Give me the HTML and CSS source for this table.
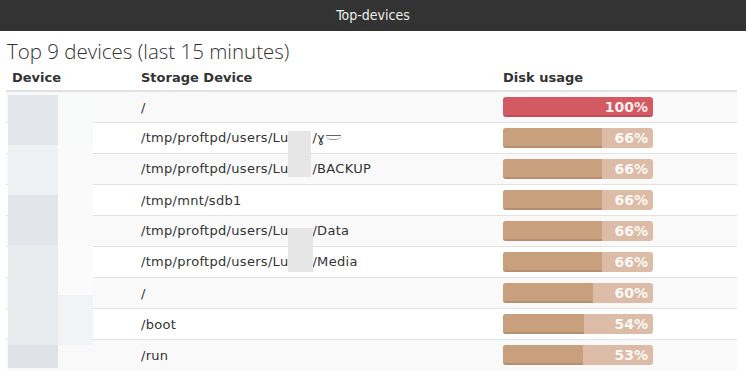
FILE: index.html
```html
<!DOCTYPE html>
<html lang="en">
<head>
  <meta charset="UTF-8" />
  <title>Top-devices</title>
  <link rel="stylesheet" href="styles.css">
</head>
<body>
  <header class="topbar">Top-devices</header>

  <div class="panel">
    <h2 class="panel-title">Top 9 devices (last 15 minutes)</h2>

    <table class="devices">
      <thead>
        <tr>
          <th class="col-device">Device</th>
          <th class="col-storage">Storage Device</th>
          <th class="col-usage">Disk usage</th>
        </tr>
      </thead>
      <tbody>
        <tr>
          <td class="device-cell">
            <!-- redacted device names -->
            <div class="mosaic">
              <div class="m m1"></div><div class="m m2"></div>
              <div class="m m3"></div><div class="m m4"></div>
              <div class="m m5"></div><div class="m m6"></div>
              <div class="m m7"></div><div class="m m8"></div>
              <div class="m m9"></div><div class="m m10"></div>
              <div class="m m11"></div><div class="m m12"></div>
            </div>
          </td>
          <td>/</td>
          <td><div class="bar full"><div class="fill" style="width:100%"></div><span class="pct">100%</span></div></td>
        </tr>
        <tr>
          <td></td>
          <td>/tmp/proftpd/users/Lu<span class="gap gap-a"></span>/ɣ<span class="scribble"></span></td>
          <td><div class="bar"><div class="fill" style="width:66%"></div><span class="pct">66%</span></div></td>
        </tr>
        <tr>
          <td></td>
          <td>/tmp/proftpd/users/Lu<span class="gap"></span>/BACKUP</td>
          <td><div class="bar"><div class="fill" style="width:66%"></div><span class="pct">66%</span></div></td>
        </tr>
        <tr>
          <td></td>
          <td>/tmp/mnt/sdb1</td>
          <td><div class="bar"><div class="fill" style="width:66%"></div><span class="pct">66%</span></div></td>
        </tr>
        <tr>
          <td></td>
          <td>/tmp/proftpd/users/Lu<span class="gap gap-b"></span>/Data</td>
          <td><div class="bar"><div class="fill" style="width:66%"></div><span class="pct">66%</span></div></td>
        </tr>
        <tr>
          <td></td>
          <td>/tmp/proftpd/users/Lu<span class="gap"></span>/Media</td>
          <td><div class="bar"><div class="fill" style="width:66%"></div><span class="pct">66%</span></div></td>
        </tr>
        <tr>
          <td></td>
          <td>/</td>
          <td><div class="bar"><div class="fill" style="width:60%"></div><span class="pct">60%</span></div></td>
        </tr>
        <tr>
          <td></td>
          <td>/boot</td>
          <td><div class="bar"><div class="fill" style="width:54%"></div><span class="pct">54%</span></div></td>
        </tr>
        <tr>
          <td></td>
          <td>/run</td>
          <td><div class="bar"><div class="fill" style="width:53%"></div><span class="pct">53%</span></div></td>
        </tr>
      </tbody>
    </table>
  </div>
</body>
</html>
```

FILE: styles.css
```css
body {
  margin: 0;
  font-family: "DejaVu Sans", Verdana, sans-serif;
  font-size: 13px;
  color: #333;
  background: #fff;
}

.topbar {
  height: 31px;
  line-height: 31px;
  background: #333;
  color: #eee;
  text-align: center;
  font-family: "DejaVu Sans Condensed", "DejaVu Sans", sans-serif;
  font-size: 14px;
}

.panel {
  padding: 0 9px 0 6px;
}

.panel-title {
  margin: 8px 0 0 1px;
  font-family: "Open Sans", sans-serif;
  font-weight: 300;
  font-size: 20.5px;
  line-height: 24px;
  color: #333;
}

/* Table */
.devices {
  width: 100%;
  border-collapse: collapse;
}

.devices th,
.devices td {
  padding: 0 6px;
  text-align: left;
  vertical-align: middle;
}

.devices th {
  height: 26px;
  padding-top: 1px;
  font-weight: bold;
  border-bottom: 2px solid #e2e2e2;
}

.col-device { width: 117px; }
.col-storage { width: 350px; }

.devices td {
  height: 30px;
  border-bottom: 1px solid #e2e2e2;
  letter-spacing: 0.3px;
}

.devices tbody tr:nth-child(odd) td { background: #f9f9f9; }

.devices tbody tr:last-child td { border-bottom: none; }

/* Redactions */
.device-cell { position: relative; }

.mosaic {
  position: absolute;
  top: 3px;
  left: 2px;
  display: grid;
  grid-template-columns: 50px 35px;
  grid-template-rows: 50px 50px 50px 50px 50px 23px;
}

.m1 { background: #e3e7eb; }
.m2 { background: #f8f9f9; }
.m3 { background: #edf1f4; }
.m4 { background: #fafafa; }
.m5 { background: #e2e6ea; }
.m6 { background: #fafafa; }
.m7 { background: #e7ebee; }
.m8 { background: #fbfbfb; }
.m9 { background: #e8ecef; }
.m10 { background: #f1f3f5; }
.m11 { background: #dee2e6; }
.m12 { background: #f9f9f9; }

.gap {
  display: inline-block;
  position: relative;
  width: 24px;
  height: 14px;
  vertical-align: middle;
}

.gap-a::after,
.gap-b::after {
  content: "";
  position: absolute;
  left: 0;
  background: #e6e6e6;
}

.gap-a::after { top: -1px; width: 23px; height: 46px; }
.gap-b::after { top: 3px; width: 25px; height: 44px; }

.scribble {
  display: inline-block;
  width: 15px;
  height: 3px;
  margin-left: 1px;
  border-top: 1px solid #666;
  border-bottom: 1px solid #999;
  border-radius: 0 0 8px 8px;
  vertical-align: 2px;
}

/* Usage bars */
.bar {
  position: relative;
  width: 150px;
  height: 20px;
  background: #dcbca6;
  border-radius: 3px;
  overflow: hidden;
}

.bar .fill {
  height: 100%;
  background: #c9a07e;
  box-shadow: inset 0 -2px 0 rgba(0, 0, 0, 0.1);
}

.bar.full .fill { background: #d35a62; }

.pct {
  position: absolute;
  top: 0;
  right: 5px;
  line-height: 20px;
  font-size: 14px;
  font-weight: bold;
  letter-spacing: 0;
  color: rgba(255, 255, 255, 0.92);
}
```
